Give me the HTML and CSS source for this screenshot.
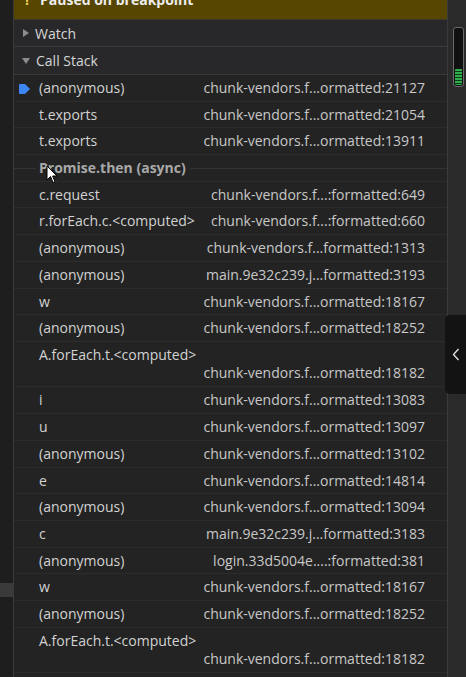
FILE: index.html
```html
<!DOCTYPE html>
<html>
<head>
<meta charset="utf-8">
<link rel="stylesheet" href="styles.css">
</head>
<body>
<div class="app">
  <div class="gutter"><div class="gutter-spacer"></div><div class="gutter-mark"></div></div>
  <div class="panel">
    <div class="paused"><div class="paused-inner"><span class="warn">!</span><span>Paused on breakpoint</span></div></div>
    <div class="section"><span class="tri tri-right"></span><span>Watch</span></div>
    <div class="section section-last"><span class="tri tri-down"></span><span>Call Stack</span></div>
    <div class="frames">
      <div class="row current"><svg class="marker" width="11" height="10" viewBox="0 0 11 10"><path d="M0 1 Q0 0 1 0 H6 L11 5 L6 10 H1 Q0 10 0 9 Z" fill="#3b86f2"/></svg><span class="fn">(anonymous)</span><span class="loc">chunk-vendors.f...ormatted:21127</span></div>
      <div class="row"><span class="fn">t.exports</span><span class="loc">chunk-vendors.f...ormatted:21054</span></div>
      <div class="row"><span class="fn">t.exports</span><span class="loc">chunk-vendors.f...ormatted:13911</span></div>
      <div class="row async"><span class="async-label">Promise.then (async)</span></div>
      <div class="row"><span class="fn">c.request</span><span class="loc">chunk-vendors.f...:formatted:649</span></div>
      <div class="row"><span class="fn">r.forEach.c.&lt;computed&gt;</span><span class="loc">chunk-vendors.f...:formatted:660</span></div>
      <div class="row"><span class="fn">(anonymous)</span><span class="loc">chunk-vendors.f...formatted:1313</span></div>
      <div class="row"><span class="fn">(anonymous)</span><span class="loc">main.9e32c239.j...formatted:3193</span></div>
      <div class="row"><span class="fn">w</span><span class="loc">chunk-vendors.f...ormatted:18167</span></div>
      <div class="row"><span class="fn">(anonymous)</span><span class="loc">chunk-vendors.f...ormatted:18252</span></div>
      <div class="row two"><span class="fn">A.forEach.t.&lt;computed&gt;</span><span class="loc">chunk-vendors.f...ormatted:18182</span></div>
      <div class="row"><span class="fn">i</span><span class="loc">chunk-vendors.f...ormatted:13083</span></div>
      <div class="row"><span class="fn">u</span><span class="loc">chunk-vendors.f...ormatted:13097</span></div>
      <div class="row"><span class="fn">(anonymous)</span><span class="loc">chunk-vendors.f...ormatted:13102</span></div>
      <div class="row"><span class="fn">e</span><span class="loc">chunk-vendors.f...ormatted:14814</span></div>
      <div class="row"><span class="fn">(anonymous)</span><span class="loc">chunk-vendors.f...ormatted:13094</span></div>
      <div class="row"><span class="fn">c</span><span class="loc">main.9e32c239.j...formatted:3183</span></div>
      <div class="row"><span class="fn">(anonymous)</span><span class="loc">login.33d5004e....:formatted:381</span></div>
      <div class="row"><span class="fn">w</span><span class="loc">chunk-vendors.f...ormatted:18167</span></div>
      <div class="row"><span class="fn">(anonymous)</span><span class="loc">chunk-vendors.f...ormatted:18252</span></div>
      <div class="row two"><span class="fn">A.forEach.t.&lt;computed&gt;</span><span class="loc">chunk-vendors.f...ormatted:18182</span></div>
    </div>
    <svg class="cursor" width="12" height="19" viewBox="0 0 12 19"><path d="M1 1 L1 15 L4.5 11.5 L7 17.5 L9 16.7 L6.6 11 L11 11 Z" fill="#ffffff" stroke="#000" stroke-width="1" stroke-linejoin="round"/></svg>
  </div>
  <div class="scrollcol">
    <div class="thumb"><div class="thumb-fill"></div></div>
  </div>
  <div class="side-tab"><svg width="8" height="13" viewBox="0 0 8 13"><path d="M6.5 1 L1.5 6.5 L6.5 12" fill="none" stroke="#e6e6e6" stroke-width="1.3"/></svg></div>
</div>
</body>
</html>
```

FILE: styles.css
```css
html, body {
  margin: 0;
  padding: 0;
  background: #1f1f1f;
}
body {
  width: 466px;
  height: 677px;
  overflow: hidden;
  font-family: "Open Sans", "Noto Sans", sans-serif;
  font-size: 14px;
  color: #cfcfcf;
}
.app {
  position: relative;
  display: flex;
  height: 677px;
}
.gutter {
  width: 13px;
  flex: none;
  background: #1e1e1e;
  border-right: 1px solid #3a3a3a;
}
.gutter-spacer { height: 583px; }
.gutter-mark { height: 14px; background: #3a3a3a; }
.panel {
  position: relative;
  width: 433px;
  flex: none;
  background: #232323;
  border-right: 1px solid #3b3b3b;
}
.paused {
  height: 19px;
  overflow: hidden;
  background: #574600;
  border-bottom: 1px solid #3e3a2a;
}
.paused-inner {
  display: flex;
  align-items: center;
  gap: 10px;
  margin-top: -13px;
  padding-left: 10px;
  height: 24px;
  font-weight: 700;
  color: #ededed;
}
.warn {
  display: inline-flex;
  justify-content: center;
  width: 6px;
  color: #f3d350;
}
.section {
  display: flex;
  align-items: center;
  gap: 6px;
  height: 26px;
  padding-left: 8px;
  background: #28282a;
  border-bottom: 1px solid #3a3a3a;
  color: #d6d6d6;
}
.section-last { height: 27px; }
.tri {
  width: 0;
  height: 0;
  display: inline-block;
}
.tri-right {
  border-top: 4px solid transparent;
  border-bottom: 4px solid transparent;
  border-left: 6px solid #8c8c8c;
  margin-left: 1px;
}
.tri-down {
  border-left: 4px solid transparent;
  border-right: 4px solid transparent;
  border-top: 6px solid #8c8c8c;
}
.row {
  position: relative;
  box-sizing: border-box;
  height: 26.7px;
  display: flex;
  justify-content: space-between;
  align-items: flex-start;
  padding: 4px 22px 0 25px;
  line-height: 18px;
  border-bottom: 1px solid #2c2c2c;
}
.row.two {
  height: 45.6px;
  flex-direction: column;
  justify-content: flex-start;
}
.row.two .loc { align-self: flex-end; }
.fn { white-space: nowrap; color: #d2d2d2; }
.loc { white-space: nowrap; color: #c8c8c8; }
.marker {
  position: absolute;
  left: 5px;
  top: 9px;
}
.row.async {
  padding-left: 22px;
  align-items: center;
  padding-top: 0;
}
.row.async::before {
  content: "";
  position: absolute;
  left: 0;
  right: 0;
  top: 50%;
  border-top: 1px solid #333;
}
.async-label {
  position: relative;
  padding: 0 4px 0 3px;
  background: #232323;
  font-weight: 700;
  color: #a9a9a9;
}
.cursor {
  position: absolute;
  left: 32px;
  top: 165px;
}
.scrollcol {
  flex: 1;
  background: #2a2a2a;
  position: relative;
}
.thumb {
  position: absolute;
  left: 5px;
  top: 27px;
  width: 7px;
  height: 56px;
  border: 1px solid #6a6a6a;
  border-radius: 3px;
  background: #111;
  display: flex;
  flex-direction: column;
  justify-content: flex-end;
  padding: 1px;
  box-sizing: content-box;
}
.thumb-fill {
  height: 16px;
  background: repeating-linear-gradient(to bottom, #2fae4e 0 2px, #0f3a1a 2px 3px);
  border-radius: 1px;
}
.side-tab {
  position: absolute;
  left: 445px;
  top: 315px;
  width: 21px;
  height: 79px;
  background: #131313;
  border-radius: 5px 0 0 5px;
  display: flex;
  align-items: center;
  justify-content: center;
}
```
